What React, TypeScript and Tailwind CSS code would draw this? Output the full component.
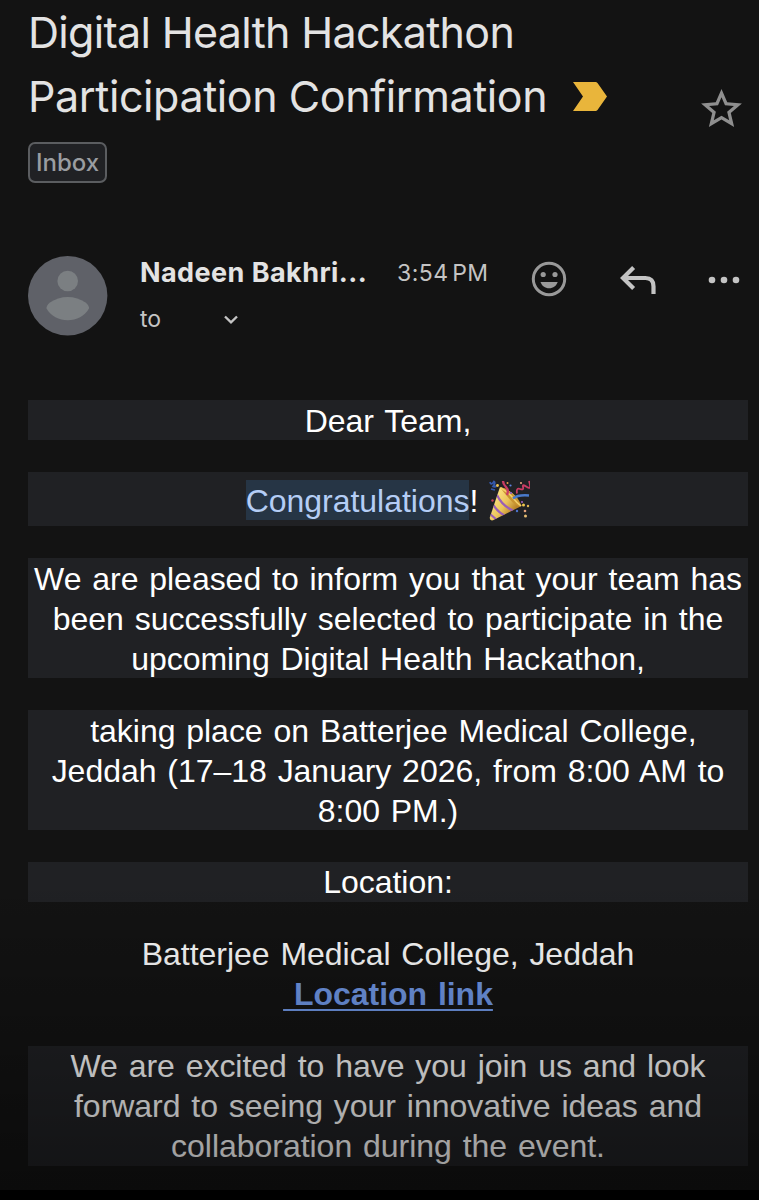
import React from 'react';

function ImportantMarker() {
  return (
    <svg className="w-[34px] h-[29px]" viewBox="0 0 34 29" fill="#e9b53b">
      <path d="M0 0h22.5q1.2 0 2 1L34 14.5 24.500 28q-.8 1-2 1H0l10-14.500z" />
    </svg>
  );
}

function StarIcon() {
  return (
    <svg className="w-[49px] h-12" viewBox="0 0 24 24" preserveAspectRatio="none" fill="#8f8f8f">
      <path d="M22 9.240l-7.190-.62L12 2 9.190 8.630 2 9.240l5.460 4.730L5.820 21 12 17.270 18.180 21l-1.630-7.030L22 9.240zM12 15.400l-3.760 2.270 1-4.280-3.320-2.880 4.380-.38L12 6.100l1.710 4.040 4.380.38-3.320 2.880 1 4.280L12 15.400z" />
    </svg>
  );
}

function Avatar() {
  return (
    <svg className="w-20 h-20 shrink-0" viewBox="0 0 80 80">
      <circle cx="39.700" cy="39.700" r="39.700" fill="#5f6168" />
      <circle cx="39.700" cy="25" r="10.300" fill="#7b7f82" />
      <path d="M18.600 52.500C18 51 19.500 48.500 22 46.500 32 39 47.500 39 57.500 46.500c2.500 2 4 4.500 3.400 6C53 68 26.500 68 18.600 52.500z" fill="#7b7f82" />
    </svg>
  );
}

function SmileIcon() {
  return (
    <svg className="w-[36px] h-[36px]" viewBox="0 0 36 36" fill="#999">
      <circle cx="18" cy="18" r="15.700" fill="none" stroke="#999" strokeWidth="3" />
      <circle cx="12.200" cy="13.500" r="2.600" />
      <circle cx="24" cy="13.500" r="2.600" />
      <path d="M9.500 21h17.200c-1.200 3.800-4.500 6.300-8.600 6.300s-7.400-2.500-8.600-6.300z" />
    </svg>
  );
}

function ReplyIcon() {
  return (
    <svg className="w-[36px] h-[28px]" viewBox="0 0 36 28" fill="none" stroke="#c4c4c4" strokeWidth="4.200">
      <path d="M13.600 1.500L3 12l10.600 10.500M3 12h22.500q8 0 8 8.400V28" />
    </svg>
  );
}

function PartyPopper() {
  return (
    <svg className="w-[41px] h-[41px]" viewBox="0 0 41 41" fill="none">
      <defs>
        <linearGradient id="cone" x1="6" y1="20" x2="24" y2="32" gradientUnits="userSpaceOnUse">
          <stop offset="0" stopColor="#f8dc78" />
          <stop offset=".5" stopColor="#eac45a" />
          <stop offset="1" stopColor="#b98328" />
        </linearGradient>
        <clipPath id="coneClip">
          <path d="M11 7L.8 37.500Q.5 41 4 40.300L32.500 26Q28 12 11 7z" />
        </clipPath>
      </defs>
      <path d="M11 7L.8 37.500Q.5 41 4 40.300L32.500 26Q28 12 11 7z" fill="url(#cone)" />
      <g clipPath="url(#coneClip)" stroke="#9a5fb5" strokeWidth="2.200">
        <path d="M8 15q5 11 17 16M4.500 25q4 7 12 11M1 34l7 6" />
      </g>
      <path d="M11 7q12 2 21.500 19-5 1-12-7T11 7z" fill="#c9932f" />
      <path d="M12 8q8 5 12 10t8 8" stroke="#f3d069" strokeWidth="1.500" />
      <path d="M18 15q2-5-1-8t-3-6" stroke="#c93d64" strokeWidth="2.400" />
      <path d="M1 2q1 4 4-.5 2 1-1 5 2 1 4-1M2 9l4 1" stroke="#3559ad" strokeWidth="1.800" />
      <path d="M28 13.500q-1-6 3-4.500t3-2 4 0 2-6" stroke="#c93d64" strokeWidth="1.800" />
      <path d="M24 18.500q5-4 16-3" stroke="#4a7acb" strokeWidth="2.600" />
      <circle cx="8.500" cy="5.500" r="1.400" fill="#f2c44d" />
      <circle cx="18.500" cy="3" r="1" fill="#e8a24a" />
      <circle cx="21.500" cy="5.500" r="1.100" fill="#5d82df" />
      <circle cx="22" cy="13" r="1.100" fill="#8a61c9" />
      <circle cx="32" cy="3" r="1.100" fill="#e3a37c" />
      <circle cx="3.500" cy="20.500" r="1.200" fill="#c7435b" />
      <circle cx="33" cy="22" r="1.100" fill="#9c62bd" />
      <circle cx="39" cy="26" r="1.200" fill="#e0b553" />
      <circle cx="34.500" cy="25" r="1.500" fill="#f0c64e" />
      <circle cx="28" cy="31" r="1.200" fill="#4a72cc" />
      <circle cx="36" cy="31" r="1.300" fill="#e3a37c" />
      <circle cx="36.500" cy="36" r="1.500" fill="#e8bd72" />
    </svg>
  );
}

function Block({ className = '', children }: { className?: string; children: React.ReactNode }) {
  return <p className={`bg-[#202124] ${className}`}>{children}</p>;
}

export default function App() {
  return (
    <div className="relative w-[759px] h-[1200px] overflow-hidden bg-[#131313] font-['Inter',sans-serif] text-[#e3e3e3]">
      <header className="flex h-[256px] pl-7 pr-[13px]">
        <div className="flex-1">
          <h1 className="text-[43px] leading-[64px] whitespace-nowrap">
            <span className="block tracking-[-0.68px]">Digital Health Hackathon</span>
            <span className="flex items-center gap-[26px] tracking-[-0.41px]">
              Participation Confirmation
              <ImportantMarker />
            </span>
          </h1>
          <div className="mt-[14px] flex h-[41px] w-[79px] items-center justify-center rounded-[7px] border-2 border-[#5b5d60] bg-[#202124] text-[24px] font-medium text-[#9a9da1]">
            Inbox
          </div>
        </div>
        <div className="pt-[85px]"><StarIcon /></div>
      </header>

      <section className="flex h-[144px] pl-7 pr-[19px]">
        <Avatar />
        <div className="ml-8 w-[257px]">
          <div className="text-[27px] leading-[34px] font-bold tracking-[0.43px] whitespace-nowrap">Nadeen Bakhri...</div>
          <div className="mt-3 flex items-center gap-[63px] text-[23px] leading-[34px] text-[#c4c4c4]">
            to
            <svg className="w-[14px] h-[9px]" viewBox="0 0 14 9" fill="none" stroke="#c4c4c4" strokeWidth="2.400">
              <path d="M1 1.500l6 5.800 6-5.800" />
            </svg>
          </div>
        </div>
        <div className="w-[134px] text-[23px] leading-[34px] tracking-[0.5px] [word-spacing:-3.500px] text-[#c4c4c4] whitespace-nowrap">3:54 PM</div>
        <div className="flex flex-1 items-start justify-between">
          <div className="pt-[5px]"><SmileIcon /></div>
          <div className="pt-[10px]"><ReplyIcon /></div>
          <svg className="mt-[20px] w-8 h-2" viewBox="0 0 32 8" fill="#c4c4c4">
            <circle cx="4" cy="4" r="3.300" />
            <circle cx="16" cy="4" r="3.300" />
            <circle cx="28" cy="4" r="3.300" />
          </svg>
        </div>
      </section>

      <main className="ml-7 flex w-[720px] flex-col gap-8 text-center font-['Liberation_Sans',Arial,sans-serif] text-[32px] leading-[40px] tracking-[-0.03px] [word-spacing:2px] text-white whitespace-nowrap">
        <Block className="h-10 pt-px">Dear Team,</Block>
        <div className="flex h-[54px] items-start justify-center bg-[#202124] pt-2">
          <span className="h-10 bg-[#263545] pt-px text-[#b4cdf5]">Congratulations</span>
          <span className="pt-px">!</span>
          <span className="ml-[11px]"><PartyPopper /></span>
        </div>
        <Block className="h-[120px] pt-px">
          We are pleased to inform you that your team has
          <br />
          been successfully selected to participate in the
          <br />
          upcoming Digital Health Hackathon,
        </Block>
        <Block className="h-[120px] pt-px">
          &nbsp;taking place on Batterjee Medical College,
          <br />
          Jeddah (17–18 January 2026, from 8:00 AM to
          <br />
          8:00 PM.)
        </Block>
        <Block>Location:</Block>
        <p>
          Batterjee Medical College, Jeddah
          <br />
          <a className="font-bold text-[#7199e8] underline decoration-2 underline-offset-4">&nbsp;Location link</a>
        </p>
        <Block>
          We are excited to have you join us and look
          <br />
          forward to seeing your innovative ideas and
          <br />
          collaboration during the event.
        </Block>
      </main>

      {/* bottom fade */}
      <div className="pointer-events-none absolute inset-x-0 bottom-[10px] h-[310px] bg-linear-to-b from-black/0 to-black/42" />
      <div className="absolute inset-x-0 bottom-0 h-[10px] bg-black" />
    </div>
  );
}
